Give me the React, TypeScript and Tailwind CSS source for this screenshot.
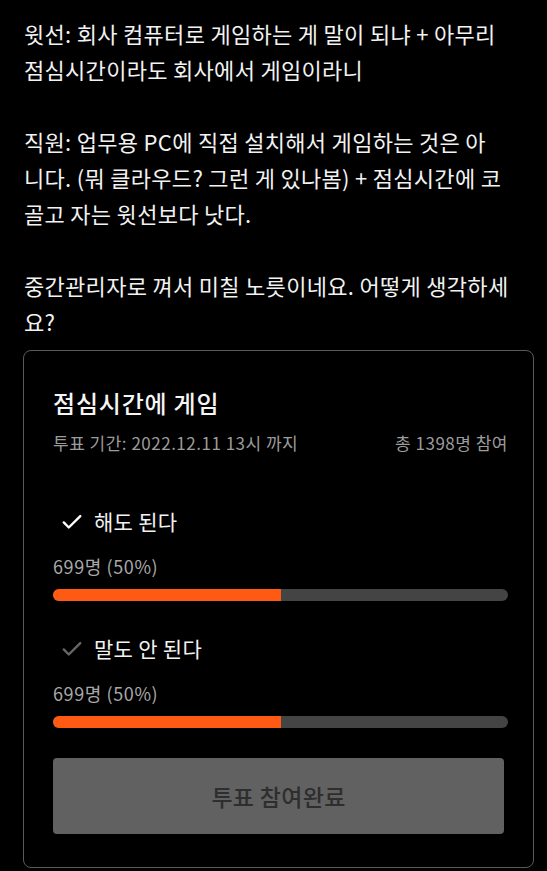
import React from 'react';

const lines = [
  ['윗선: 회사 컴퓨터로 게임하는 게 말이 되냐 + 아무리', '점심시간이라도 회사에서 게임이라니'],
  ['직원: 업무용 PC에 직접 설치해서 게임하는 것은 아', '니다. (뭐 클라우드? 그런 게 있나봄) + 점심시간에 코', '골고 자는 윗선보다 낫다.'],
  ['중간관리자로 껴서 미칠 노릇이네요. 어떻게 생각하세', '요?'],
];

const Check = ({ color }: { color: string }) => (
  <svg width="22" height="22" viewBox="0 0 24 24" fill="none" stroke={color} strokeWidth="2.6" strokeLinecap="round" strokeLinejoin="round">
    <path d="M3 12.5l5.5 5.5L21 5.5" />
  </svg>
);

const Option = ({ label, checkColor, first }: { label: string; checkColor: string; first?: boolean }) => (
  <div className={first ? 'mt-[53px]' : 'mt-[34px]'}>
    <div className="flex items-center h-[28px] pl-[8px] gap-[11px] text-[21px] tracking-[0.3px] text-[#f2f2f2]">
      <Check color={checkColor} />
      <span>{label}</span>
    </div>
    <div className="mt-[18px] h-[24px] leading-[24px] text-[18px] tracking-[0.6px] text-[#a8a8a8]">699명 (50%)</div>
    <div className="mt-[11px] h-[12px] w-full rounded-full bg-[#444444] overflow-hidden flex">
      <div className="h-full w-1/2 bg-[#ff5a14]" />
    </div>
  </div>
);

const App: React.FC = () => {
  return (
    <div className="min-h-screen bg-black text-[#f2f2f2] font-['Noto_Sans_CJK_KR','Noto_Sans',sans-serif] px-[23px] pb-[3px]">
      <div className="pt-[15px] pl-[1px] text-[22px] tracking-[0.3px] leading-[36px]">
        {lines.map((para, i) => (
          <div key={i} className={i > 0 ? 'mt-[36px]' : ''}>
            {para.map((l) => (
              <div key={l} className="whitespace-nowrap">{l}</div>
            ))}
          </div>
        ))}
      </div>

      <div className="mt-[11px] w-[511px] border border-[#5a5a5a] rounded-[8px] pt-[37px] pb-[33px] pl-[29px] pr-[25px]">
        <div className="h-[30px] leading-[30px] text-[24px] tracking-[0.8px] font-medium text-[#f5f5f5]">점심시간에 게임</div>
        <div className="mt-[13px] flex justify-between h-[24px] leading-[24px] text-[17px] tracking-[0.5px] text-[#9c9c9c]">
          <span>투표 기간: 2022.12.11 13시 까지</span>
          <span>총 1398명 참여</span>
        </div>

        <Option label="해도 된다" checkColor="#ffffff" first />
        <Option label="말도 안 된다" checkColor="#666666" />

        <div className="mt-[30px] h-[76px] w-[451px] rounded-[4px] bg-[#616161] flex items-center justify-center text-[23px] tracking-[0.3px] font-medium text-[#2e2e2e]">
          투표 참여완료
        </div>
      </div>
    </div>
  );
};

export default App;
